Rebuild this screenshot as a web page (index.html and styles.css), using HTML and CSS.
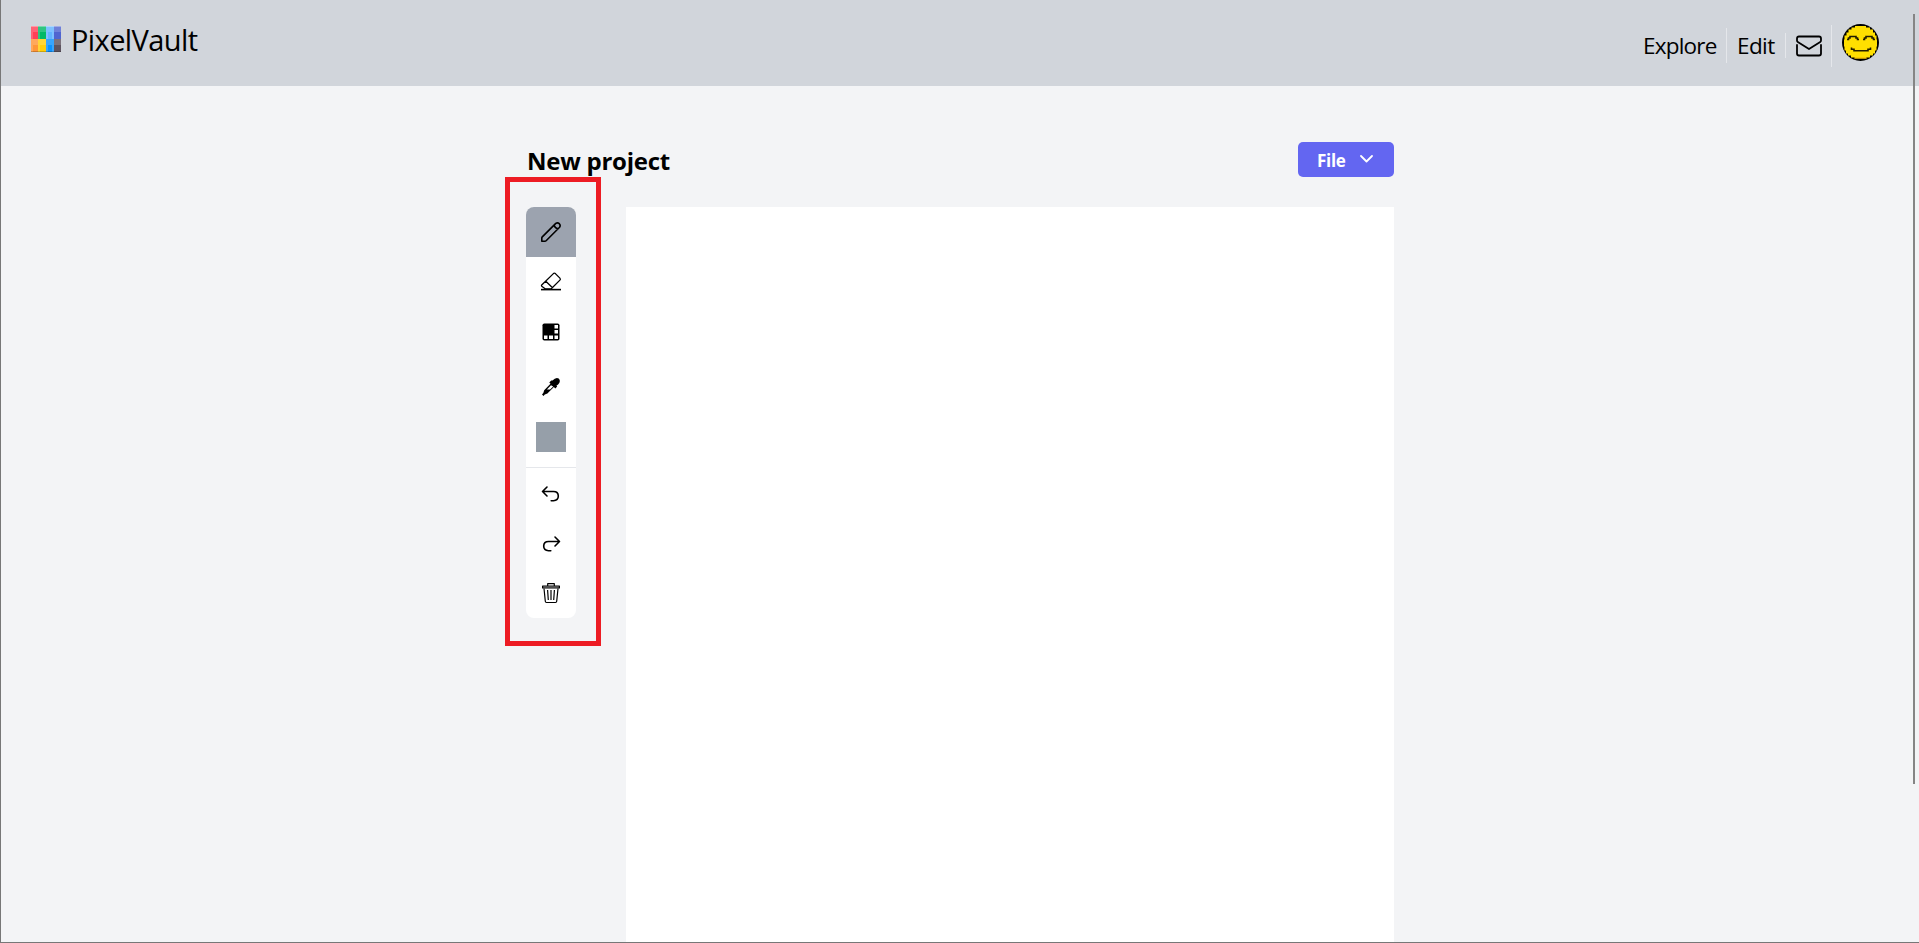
FILE: index.html
```html
<!DOCTYPE html>
<html lang="en">
<head>
<meta charset="utf-8">
<title>PixelVault</title>
<link rel="stylesheet" href="styles.css">
</head>
<body>
<div class="page">
  <header class="header">
    <div class="brand">
      <svg class="logo" viewBox="0 0 30 26" shape-rendering="crispEdges">
        <path fill="#ff4057" d="M0 0h8v13H0z"/><path fill="#00b966" d="M7 0h8v13H7z"/><path fill="#62b4ff" d="M15 0h8v13h-8z"/><path fill="#5065d0" d="M23 0h7v13h-7z"/>
        <path fill="#ff9738" d="M0 13h8v13H0z"/><path fill="#ffce0b" d="M7 13h8v13H7z"/><path fill="#0b92ff" d="M15 13h8v13h-8z"/><path fill="#5e5460" d="M23 13h7v13h-7z"/>
        <path fill="#fff" opacity=".18" d="M0 0h30v6H0zM0 13h30v6H0zM0 0h2v26H0zM7 0h2v26H7zM15 0h2v26h-2zM21 0h2v26h-2z"/>
        <path fill="#fff" opacity=".35" d="M0 0h30v1H0z"/><path opacity=".2" d="M0 25h30v1H0z"/>
      </svg>
      <span class="brand-name">PixelVault</span>
    </div>
    <nav class="nav">
      <a class="link explore">Explore</a>
      <span class="rule"></span>
      <a class="link edit">Edit</a>
      <span class="rule short"></span>
      <svg class="mail" viewBox="0 0 26 22" fill="none" stroke="#000" stroke-width="1.8" stroke-linecap="round" stroke-linejoin="round">
        <path d="M3 1.500h20q2 0 2 2v2q0 1-.8 1.500L13 14 1.800 7Q1 6.500 1 5.500v-2q0-2 2-2zM1 10v8.500q0 2 2 2h20q2 0 2-2V10"/>
      </svg>
      <span class="rule tall"></span>
      <svg class="avatar" viewBox="0 0 37 37">
        <circle cx="18.500" cy="18.500" r="18.500"/>
        <path fill="#ffdf00" d="M13 2h11v1.500h4v2h3v3h2v3h1.500v4h.5v7h-.5v4h-1.500v3h-2v2h-3v2h-4v1H13v-1H9v-2H6v-2H4v-3H2.500v-4H2v-7h.5v-4h2V8.500h2v-3h3v-2H13z"/>
        <path fill="#f0b400" d="M12 33.500h13v1H12z"/>
        <path fill="none" stroke="#221d00" stroke-width="1.600" d="M5 15.500h1.500v-1.500H8v-1.500h6V14h1.500v1.500H17M21 15.500h1.500V14H24v-1.500h6V14h1.500v1.500H33M9.500 23.500v1.700H12v1.600h14v-1.600h2.500v-1.700"/>
      </svg>
    </nav>
  </header>
  <main class="workspace">
    <div class="titlebar">
      <h1 class="title">New project</h1>
      <button class="file"><span>File</span>
        <svg width="13" height="9" viewBox="0 0 13 9" fill="none" stroke="#fff" stroke-width="1.800" stroke-linecap="round" stroke-linejoin="round"><path d="M1 1l5.500 5.500L12 1"/></svg>
      </button>
    </div>
    <div class="editor">
      <div class="tools">
        <div class="tool active"><svg width="22" height="22" viewBox="0 0 22 22" fill="none" stroke="#000" stroke-width="1.600" stroke-linejoin="round"><path d="M1.800 20.200V17q0-.6.5-1.100L15.800 2.400q1.800-1.300 3.500.3 1.600 1.700.3 3.500L6.100 19.700q-.5.500-1.100.5zM14.300 3.900q.2 3.200 3.800 3.800"/></svg></div>
        <div class="tool"><svg width="22" height="22" viewBox="0 0 22 22" fill="none" stroke="#000" stroke-width="1.300" stroke-linejoin="round"><path d="M1.700 14L13.400 2.600q1-.9 2 0l4.500 4.500q.9 1 0 2L11 18H5.500l-3.800-2.800q-.5-.6 0-1.200zM5.800 10.200l7 6.800"/><path d="M1 18.600h20" stroke-width="1.600"/></svg></div>
        <div class="tool"><svg width="18" height="18" viewBox="0 0 18 18"><rect x=".5" y=".5" width="17" height="17" rx="1.800"/><path fill="#fff" d="M12.500 2h3.500v3.500h-3.500zM12.500 7h3.500v3.500h-3.500zM12.500 12.500h3.500v3.500h-3.500zM2 12.500h3.500v3.500H2zM7 12.500h4v3.500H7z"/></svg></div>
        <div class="tool dropper"><svg width="20" height="20" viewBox="0 0 20 20"><path d="M11.500 3.500q3.300-3.700 6.200-2.100 2.600 2.700-.6 6l-1.700 1.300.8.900-1.900 1.900-1.400-1.400-6.500 6.500-2.600.8-1.300 1.500-1.500-1.500 1.300-1.500.9-2.700L9.500 6.700 8.300 5.500 10.200 3.600z"/><path fill="#fff" d="M10 8.200L5.900 12.400h3.200l3.100-2.800z"/></svg></div>
        <div class="tool color"><span class="swatch"></span></div>
        <div class="tool history first"><svg width="20" height="18" viewBox="0 0 20 18" fill="none" stroke="#000" stroke-width="1.600" stroke-linecap="round" stroke-linejoin="round"><path d="M6 2L1.500 6.500 6 11M1.500 6.500h11q4.800 0 4.800 4.600 0 4.600-4.800 4.600h-2.300"/></svg></div>
        <div class="tool history"><svg width="20" height="18" viewBox="0 0 20 18" fill="none" stroke="#000" stroke-width="1.600" stroke-linecap="round" stroke-linejoin="round"><path d="M14 2l4.500 4.500L14 11M18.500 6.500h-11q-4.800 0-4.800 4.600 0 4.600 4.800 4.600h2.300"/></svg></div>
        <div class="tool trash"><svg width="20" height="22" viewBox="0 0 20 22" fill="none" stroke="#000" stroke-width="1.200" stroke-linejoin="round"><path fill="#999" d="M1.600 4h16.800v2H1.600z"/><path d="M6.700 4V1.700h6.600V4M3 6.500l1.300 12.800q.1 1.200 1.200 1.200h9q1.100 0 1.200-1.200L17 6.500M6.600 8l.7 10M10 8v10M13.400 8l-.7 10"/></svg></div>
      </div>
      <div class="canvas"></div>
    </div>
  </main>
  <div class="highlight"></div>
  <div class="scrollbar"></div>
</div>
</body>
</html>
```
FILE: styles.css
```css
* { box-sizing: border-box; }
body { margin: 0; font-family: "Open Sans", "Noto Sans", sans-serif; color: #000; }
svg { display: block; flex: none; }
.page { position: relative; height: 943px; overflow: hidden; display: flex; flex-direction: column; background: #f3f4f6; border-left: 1px solid #777; border-bottom: 1px solid #777; }
.header { height: 86px; flex: none; display: flex; justify-content: space-between; background: #d1d5db; padding: 0 40px 0 30px; }
.brand { display: flex; align-items: center; height: 80px; gap: 10px; }
.logo { width: 30px; height: 26px; margin-top: -2px; }
.brand-name { font-size: 29px; letter-spacing: -.6px; margin-top: -2px; }
.nav { display: flex; align-items: center; height: 91px; }
.link { font-size: 22.5px; white-space: nowrap; }
.explore { letter-spacing: -.8px; width: 83px; margin-right: 0; }
.edit { letter-spacing: -.6px; width: 48px; margin-left: 10px; }
.rule { width: 1px; height: 35px; background: #e5e7eb; }
.short { height: 25px; }
.tall { height: 42px; }
.mail { width: 26px; height: 22px; margin: 0 9px 0 10px; }
.avatar { width: 37px; height: 37px; margin: -6px 0 0 10px; }
.workspace { width: 868px; margin-left: 525px; flex: 1; display: flex; flex-direction: column; min-height: 0; }
.titlebar { height: 121px; flex: none; padding-top: 56px; display: flex; justify-content: space-between; align-items: flex-start; }
.title { margin: 0; font-size: 24px; line-height: 38px; letter-spacing: -.25px; padding-left: 1px; }
.file { width: 96px; height: 35px; border: 0; border-radius: 5px; background: #6366f1; color: #fff; font: bold 17px "Open Sans", sans-serif; letter-spacing: -.3px; padding: 0 21px 0 19px; display: flex; align-items: center; justify-content: space-between; }
.file span { padding-top: 2px; }
.editor { flex: 1; display: flex; align-items: flex-start; gap: 50px; min-height: 0; }
.tools { width: 50px; height: 411px; background: #fff; border-radius: 8px; overflow: hidden; }
.tool { height: 50px; display: flex; align-items: center; justify-content: center; }
.active { background: #9ca3af; }
.dropper { height: 60px; }
.swatch { width: 30px; height: 30px; background: #969fa9; margin-top: -10px; }
.first { border-top: 1px solid #e5e7eb; height: 52px; }
.trash { height: 49px; padding-bottom: 1px; }
.canvas { width: 768px; align-self: stretch; background: #fff; }
.highlight { position: absolute; left: 504px; top: 177px; width: 96px; height: 469px; border: 5px solid #ed1c24; }
.scrollbar { position: absolute; left: 1912px; top: 14px; width: 2px; height: 770px; background: #858585; }
```
